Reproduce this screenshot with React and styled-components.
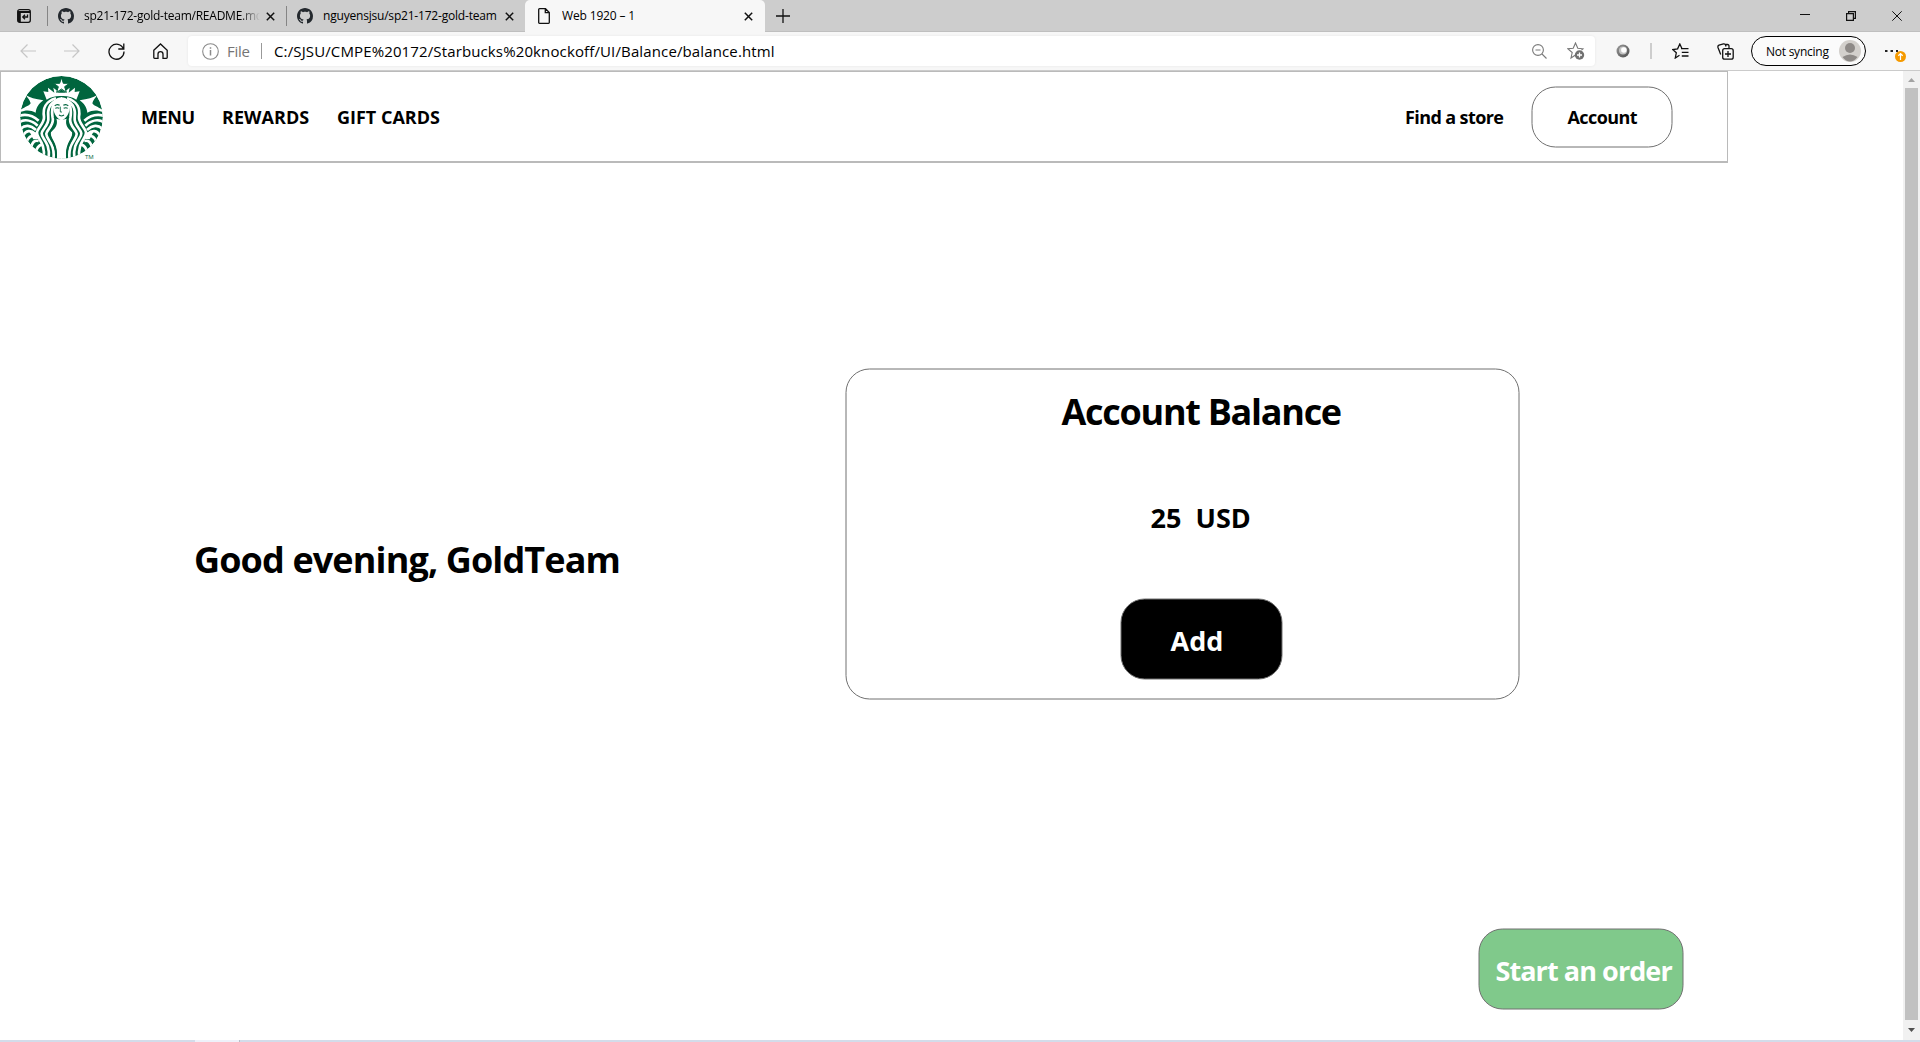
import React from "react";
import styled, { createGlobalStyle } from "styled-components";

const Global = createGlobalStyle`
  * { box-sizing: border-box; }
  body { margin: 0; background: #fff; overflow: hidden; font-family: "Open Sans", "Noto Sans", sans-serif; }
`;
const Window = styled.div`
  width: 1920px; height: 1042px; display: flex; flex-direction: column; background: #fff; color: #000;
`;
const TabStrip = styled.div`
  height: 32px; flex: none; display: flex; background: #cdcdcd; box-shadow: inset 0 -1px #bfbfbf;
`;
const StripButton = styled.div`
  width: ${(p) => p.$w}px; display: flex; align-items: center; justify-content: center;
`;
const Tab = styled.div`
  width: ${(p) => p.$w}px; height: 32px; display: flex; align-items: center; padding: 0 ${(p) => (p.$active ? 12 : 11)}px 0 ${(p) => p.$pad}px;
  background: ${(p) => (p.$active ? "#f7f7f7" : "transparent")};
  border-radius: 5px 5px 0 0;
`;
const Divider = styled.i`
  width: 1px; height: 20px; margin-top: 6px; background: #858585;
`;
const TabTitle = styled.span`
  flex: 1; margin-left: ${(p) => p.$gap}px; font-size: 12px; line-height: 18px; white-space: nowrap; overflow: hidden;
  letter-spacing: ${(p) => p.$ls}px;
  ${(p) => p.$fade && "mask-image: linear-gradient(to right, #000 156px, transparent 176px);"}
`;
const Spacer = styled.div` flex: 1; `;
const Toolbar = styled.div`
  height: 39px; flex: none; display: flex; align-items: center; background: #f7f7f7; border-bottom: 1px solid #cbcbcb;
`;
const ToolButton = styled.div`
  width: ${(p) => p.$w}px; height: 30px; flex: none; display: flex; align-items: center; justify-content: center;
`;
const Address = styled.div`
  width: 1407px; height: 30px; flex: none; display: flex; align-items: center; background: #fff; border-radius: 4px; padding: 0 10px 0 14px;
  box-shadow: 0 0 3px rgba(0,0,0,.07);
`;
const Scheme = styled.span`
  width: 26px; margin-left: 8px; font-size: 15px; letter-spacing: ${(p) => p.$ls}px; color: #757575; line-height: 20px;
`;
const AddressRule = styled.i` width: 1px; height: 16px; margin: 0 12px 0 8px; background: #999; `;
const Url = styled.span` font-size: 15px; line-height: 20px; letter-spacing: 0.13px; white-space: nowrap; `;
const ToolRule = styled.i` width: 2px; height: 16px; background: #cdcdcd; `;
const Profile = styled.div`
  width: 115px; height: 30px; flex: none; display: flex; align-items: center; justify-content: space-between;
  border: 1px solid #000; border-radius: 15px; padding: 0 4px 0 14px; font-size: 12px; background: #fbfbfb;
`;
const ProfileName = styled.span` letter-spacing: -0.25px; white-space: nowrap; `;
const More = styled.div`
  position: relative; width: 51px; height: 30px;
`;
const MoreIcon = styled.svg` position: absolute; left: 19px; top: 7px; `;

const Viewport = styled.div` height: 969px; flex: none; display: flex; `;
const Page = styled.div` flex: 1; display: flex; flex-direction: column; `;
const Header = styled.header`
  width: 1728px; height: 92px; display: flex; align-items: flex-start; border: 1px solid #bababa; border-bottom-width: 2px; padding: 4px 54px 0 19px;
`;
const NavLink = styled.a`
  width: ${(p) => p.$w}px; margin-top: 29px; margin-left: ${(p) => p.$gap || 0}px;
  font-size: 18px; font-weight: 700; line-height: 24px; white-space: nowrap; letter-spacing: ${(p) => p.$ls}px;
`;
const AccountButton = styled.div`
  width: 141px; height: 61px; margin: 10px 1px 0 0; padding: 17px 0 0 35px; border: 1px solid #707070; border-radius: 24px;
  transform: translate(0.5px, 0.5px);
  font-size: 18px; font-weight: 700; line-height: 24px; letter-spacing: ${(p) => p.$ls}px;
`;
const Main = styled.main` display: flex; align-items: flex-start; padding: 205px 0 0 194px; `;
const Greeting = styled.h1`
  width: 651px; margin: 168px 0 0; font-size: 36px; font-weight: 700; line-height: 48px; letter-spacing: ${(p) => p.$ls}px; white-space: nowrap;
`;
const Card = styled.section`
  width: 674px; height: 331px; border: 1px solid #707070; border-radius: 24px; display: flex; flex-direction: column; padding: 18px 0 0 215px;
  transform: translate(0.5px, 0.5px);
`;
const CardTitle = styled.h2`
  margin: 0; font-size: 36px; font-weight: 700; line-height: 48px; letter-spacing: ${(p) => p.$ls}px; white-space: nowrap;
`;
const Amount = styled.div`
  margin: 64px 0 0 89px; font-size: 27px; font-weight: 700; line-height: 36px; display: flex; letter-spacing: ${(p) => p.$ls}px;
`;
const Figure = styled.span` width: 45px; `;
const PillButton = styled.div`
  width: ${(p) => p.$w}px; height: 81px; margin: ${(p) => p.$margin}; padding: 23px 0 0 ${(p) => p.$pad}px; border: 1px solid #707070; border-radius: 24px;
  background: ${(p) => p.$bg};
  ${(p) => p.$offset && "transform: translate(0.5px, 0.5px);"}
  color: #fff; font-size: 27px; font-weight: 700; line-height: 36px; letter-spacing: ${(p) => p.$ls}px; white-space: nowrap;
`;
const Scrollbar = styled.div`
  width: 17px; background: #f1f1f1; display: flex; flex-direction: column; align-items: center;
`;
const Arrow = styled.div` height: ${(p) => p.$h}px; width: 17px; display: flex; align-items: center; justify-content: center; `;
const Thumb = styled.div` width: 13px; height: 932px; background: #c1c1c1; `;
const Taskbar = styled.div` height: 2px; display: flex; background: #d3dcea; padding-left: 195px; `;
const TaskActive = styled.div` width: 44px; background: #eef1fa; border-right: 1px solid #b8bec8; box-sizing: content-box; `;

const Icon = ({ w, h = w, box, children, color = "#111", sw = 1.2 }) => (
  <svg width={w} height={h} viewBox={box || `0 0 ${w} ${h}`} fill="none" stroke={color} strokeWidth={sw}>{children}</svg>
);
const Github = () => (
  <svg width="16" height="16" viewBox="0 0 16 16" fill="#24292e">
    <path d="M8 0C3.58 0 0 3.58 0 8c0 3.54 2.29 6.53 5.47 7.59.4.07.55-.17.55-.38 0-.19-.01-.82-.01-1.49-2.01.37-2.53-.49-2.69-.94-.09-.23-.48-.94-.82-1.13-.28-.15-.68-.52-.01-.53.63-.01 1.08.58 1.23.82.72 1.21 1.87.87 2.33.66.07-.52.28-.87.51-1.07-1.78-.2-3.64-.89-3.64-3.95 0-.87.31-1.59.82-2.15-.08-.2-.36-1.02.08-2.12 0 0 .67-.21 2.2.82.64-.18 1.32-.27 2-.27s1.36.09 2 .27c1.53-1.04 2.2-.82 2.2-.82.44 1.1.16 1.92.08 2.12.51.56.82 1.27.82 2.15 0 3.07-1.87 3.75-3.65 3.95.29.25.54.73.54 1.48 0 1.07-.01 1.93-.01 2.2 0 .21.15.46.55.38A8 8 0 0 0 16 8c0-4.42-3.58-8-8-8z" />
  </svg>
);
const Close = () => <Icon w={9} sw={1.5}><path d="M.8.8l7.4 7.4M8.2.8L.8 8.2" /></Icon>;

const half = (
  <>
    <path fill="#fff" stroke="none" d="M78 106Q94 116 130 121C117 130 109 141 107 158C91 149 76 149 56 158C60 146 69 147 77 140C84 138 90 134 92 130C90 122 84 115 78 106Z" />
    <g stroke="#fff" strokeWidth="8">
      <path d="M52 169C76 160 98 166 116 182" />
      <path d="M54 189C72 176 94 180 113 197" />
      <path d="M60 209C74 192 92 195 108 210" />
      <path d="M68 229C78 210 92 209 106 222" />
      <path d="M79 247C86 228 96 224 108 232" />
      <path d="M93 264C96 246 104 240 116 243" />
      <path d="M108 278C110 261 116 256 126 254" />
    </g>
    <path fill="#fff" stroke="none" d="M88 214L112 218L118 236L100 238Z" />
    <g stroke="#fff" strokeWidth="8">
      <path d="M168 115C136 124 128 147 132 170C134 191 112 203 111 218C110 236 137 246 131 294" />
      <path d="M168 121C147 132 142 150 145 172C148 195 127 206 125 220C124 236 152 246 146 296" />
      <path d="M164 130C154 142 155 156 158 174C163 197 141 207 139 221C137 238 167 250 160 298" />
    </g>
    <path fill="#fff" stroke="none" d="M186 74L176 96L160 83L163 98L144 83L145 96L130 94L140 119Q160 106 186 108Z" />
    <path fill="#fff" stroke="none" d="M186 112C165 112 159 126 160 145C161 163 173 178 186 182Z" />
    <path fill="#fff" stroke="none" d="M186 180L168 176C176 198 162 206 153 217C148 236 177 248 170 298L186 298Z" />
    <path stroke="#00653e" strokeWidth="4.500" d="M164 168C176 192 158 203 149 217C144 236 174 248 168 298" />
    <path stroke="#00653e" strokeWidth="3.200" d="M164 138Q170 131 179 136M166 145Q171 141 178 145" />
    <path stroke="#00653e" strokeWidth="3.500" d="M177 165Q182 168 186 168" />
  </>
);
const Siren = () => (
  <svg width="83" height="85" viewBox="60 48 249 255" fill="none">
    <defs><clipPath id="disc"><circle cx="184.5" cy="172" r="124" /></clipPath></defs>
    <g clipPath="url(#disc)">
      <circle cx="184.5" cy="172" r="124" fill="#00653e" />
      {half}
      <g transform="translate(369 0) scale(-1 1)">{half}</g>
      <path fill="#00653e" d="M169 98H200L194 96L184 88L176 96Z" />
      <path fill="#fff" stroke="#00653e" strokeWidth="3" d="M184.500 53L190 70L208 70L194 80L199 97L184.500 87L170 97L175 80L161 70L179 70Z" />
      <path stroke="#00653e" strokeWidth="2.500" d="M181 140V156H186" />
    </g>
    <text x="255" y="297" fontFamily="Open Sans, sans-serif" fontSize="18" fill="#00653e">TM</text>
  </svg>
);

export default function App() {
  return (
    <Window>
      <Global />
      <TabStrip>
        <StripButton $w={47}>
          <Icon w={14} sw={1.3}>
            <rect x=".7" y=".7" width="12.600" height="12.600" rx="2" /><path d="M1 3H13" strokeWidth="2" /><path d="M2.300 3V13" strokeWidth="3" /><path d="M10.500 5.500V8H6M8 5.800L5.800 8L8 10.200" />
          </Icon>
        </StripButton>
        <Divider />
        <Tab $w={238} $pad={10}><Github /><TabTitle $gap={10} $fade $ls={-0.24}>sp21-172-gold-team/README.md</TabTitle><Close /></Tab>
        <Divider />
        <Tab $w={238} $pad={10}><Github /><TabTitle $gap={10} $ls={-0.2}>nguyensjsu/sp21-172-gold-team</TabTitle><Close /></Tab>
        <Tab $w={240} $pad={13} $active>
          <Icon w={12} h={16} sw={1.300}><path d="M.7 1.500Q.7.700 1.500.700H7.500L11.300 4.500V14.500Q11.300 15.300 10.500 15.300H1.500Q.7 15.300.7 14.500ZM7.300.700V4.700H11.300" /></Icon>
          <TabTitle $gap={12} $ls={-0.15}>Web 1920 – 1</TabTitle><Close />
        </Tab>
        <StripButton $w={35}><Icon w={14} sw={1.3}><path d="M7 0V14M0 7H14" /></Icon></StripButton>
        <Spacer />
        <StripButton $w={46}><Icon w={10} h={8} sw={1}><path d="M0 2.500H10" /></Icon></StripButton>
        <StripButton $w={46}><Icon w={10} sw={1.2}><path d="M.6 2.600H7.400V9.400H.6ZM2.600 2.600V.6H9.400V7.400H7.400" /></Icon></StripButton>
        <StripButton $w={46}><Icon w={10} sw={1}><path d="M.3.3L9.700 9.700M9.700.3L.3 9.700" /></Icon></StripButton>
      </TabStrip>
      <Toolbar>
        <ToolButton $w={56}><Icon w={16} h={14} color="#c6c6c6"><path d="M16 7H1M7.500.500L1 7L7.500 13.500" /></Icon></ToolButton>
        <ToolButton $w={32}><Icon w={16} h={14} color="#c6c6c6"><path d="M0 7H15M8.500.500L15 7L8.500 13.500" /></Icon></ToolButton>
        <ToolButton $w={56}><Icon w={17} sw={1.3}><path d="M15.500 6A7.500 7.500 0 1 0 16 8.500M15.800.500V6H10.300" /></Icon></ToolButton>
        <ToolButton $w={32}><Icon w={15} h={16} sw={1.3}><path d="M.8 7.300L7.500 1L14.200 7.300V14.500Q14.200 15.300 13.400 15.300H10V11Q10 8.700 7.500 8.700Q5 8.700 5 11V15.300H1.600Q.8 15.300.8 14.500Z" /></Icon></ToolButton>
        <ToolButton $w={12} />
        <Address>
          <Icon w={17} color="#8a8a8a" sw={1.1}><circle cx="8.500" cy="8.500" r="7.800" /><path d="M8.500 7V12.500M8.500 4.300V5.800" strokeWidth="1.500" /></Icon>
          <Scheme $ls={-0.3}>File</Scheme>
          <AddressRule />
          <Url>C:/SJSU/CMPE%20172/Starbucks%20knockoff/UI/Balance/balance.html</Url>
          <Spacer />
          <Icon w={15} color="#7b7b7b" sw={1.1}><circle cx="6" cy="6" r="5.400" /><path d="M3.500 6H8.500M10 10L14.500 14.500" /></Icon>
          <ToolButton $w={20} />
          <Icon w={18} h={18} color="#777" sw={1.1}><path d="M8.500 13L4 16L5.200 10.500L1 6.800L6.200 6.200L8.500 1L10.800 6.200L16 6.800L14.500 8.200" /><circle cx="12.500" cy="13" r="4.700" fill="#707070" stroke="none" /><path d="M12.500 10.500V15.500M10 13H15" stroke="#fff" strokeWidth="1.300" /></Icon>
        </Address>
        <ToolButton $w={55}>
          <svg width="14" height="14"><defs><linearGradient id="ring" x1="0" y1="0" x2="1" y2="1"><stop offset="0" stopColor="#9a9a9a" /><stop offset="1" stopColor="#4c4c4c" /></linearGradient></defs><circle cx="7" cy="7" r="6.500" fill="url(#ring)" /><circle cx="7" cy="6.600" r="4" fill="#c4c4c4" /><circle cx="7.800" cy="6" r="2.700" fill="#fff" /></svg>
        </ToolButton>
        <ToolRule />
        <ToolButton $w={57}>
          <Icon w={17} h={16} sw={1.3}><path d="M7.500 12.300L3.300 15L4.300 9.800L.8 6.500L5.600 5.800L7.800 1L9.800 5.300M9 5.600H16.500M9.800 9.300H16.500M9.800 13H16.500" /></Icon>
        </ToolButton>
        <ToolButton $w={32}>
          <Icon w={17} h={17} sw={1.3}><rect x="5.700" y="5.700" width="10.500" height="10.500" rx="2" /><path d="M11 8V14M8 11H14M3.700 11.500L1 4.500Q.5 2.800 2 2.200L6.500.900Q8 .500 8.600 2L9 3.500M12 5V3Q12 1.500 10.500 1.500H8" /></Icon>
        </ToolButton>
        <ToolButton $w={10} />
        <Profile>
          <ProfileName>Not syncing</ProfileName>
          <svg width="22" height="22"><circle cx="11" cy="11" r="11" fill="#d3d0cc" /><circle cx="11" cy="8" r="5" fill="#8e8a87" /><path d="M3.500 17Q11 12 18.500 17Q15 21.500 11 21.500Q7 21.500 3.500 17" fill="#8e8a87" /></svg>
        </Profile>
        <More>
          <MoreIcon width="24" height="20"><path d="M0 7h2.500v2h-2.500zM5.500 7h2.500v2h-2.500zM11 7h2v2h-2z" fill="#222" /><circle cx="15.500" cy="13.500" r="5.500" fill="#f59a00" /><path d="M15.500 17V11M13.300 12.800L15.500 10.700L17.700 12.800" fill="none" stroke="#fff" strokeWidth="1.200" /></MoreIcon>
        </More>
      </Toolbar>
      <Viewport>
        <Page>
          <Header>
            <Siren />
            <NavLink $gap={38} $w={81} $ls={-0.4}>MENU</NavLink>
            <NavLink $w={115} $ls={0.05}>REWARDS</NavLink>
            <NavLink $w={120} $ls={0}>GIFT CARDS</NavLink>
            <Spacer />
            <NavLink $w={126} $ls={-0.6}>Find a store</NavLink>
            <AccountButton $ls={-0.6}>Account</AccountButton>
          </Header>
          <Main>
            <Greeting $ls={-0.88}>Good evening, GoldTeam</Greeting>
            <Card>
              <CardTitle $ls={-1.28}>Account Balance</CardTitle>
              <Amount $ls={0}><Figure>25</Figure>USD</Amount>
              <PillButton $w={162} $pad={49} $margin="63px 0 0 59px" $bg="#000" $ls={0}>Add</PillButton>
            </Card>
          </Main>
          <PillButton $w={205} $pad={16} $margin="229px 0 0 1478px" $bg="#80c98b" $offset $ls={-0.93}>Start an order</PillButton>
        </Page>
        <Scrollbar>
          <Arrow $h={17}><svg width="7" height="4"><path d="M0 4L3.500 0L7 4" fill="#a3a3a3" /></svg></Arrow>
          <Thumb />
          <Arrow $h={20}><svg width="7" height="4"><path d="M0 0L3.500 4L7 0" fill="#505050" /></svg></Arrow>
        </Scrollbar>
      </Viewport>
      <Taskbar><TaskActive /></Taskbar>
    </Window>
  );
}
